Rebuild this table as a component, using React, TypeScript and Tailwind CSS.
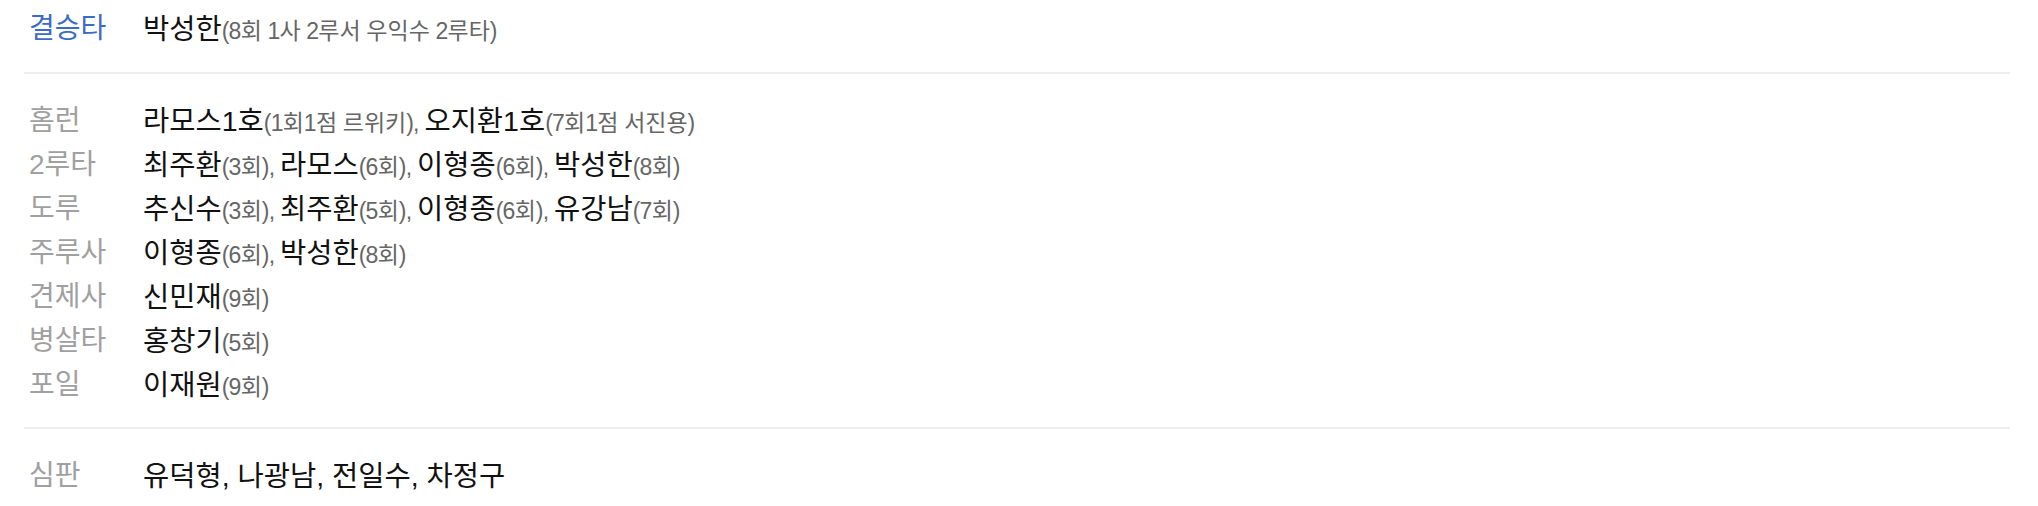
type Part = { name: string; note?: string };

type Row = {
  label: string;
  highlight?: boolean;
  items: Part[];
};

const decisive: Row[] = [
  {
    label: "결승타",
    highlight: true,
    items: [{ name: "박성한", note: "(8회 1사 2루서 우익수 2루타)" }],
  },
];

const records: Row[] = [
  {
    label: "홈런",
    items: [
      { name: "라모스1호", note: "(1회1점 르위키)" },
      { name: "오지환1호", note: "(7회1점 서진용)" },
    ],
  },
  {
    label: "2루타",
    items: [
      { name: "최주환", note: "(3회)" },
      { name: "라모스", note: "(6회)" },
      { name: "이형종", note: "(6회)" },
      { name: "박성한", note: "(8회)" },
    ],
  },
  {
    label: "도루",
    items: [
      { name: "추신수", note: "(3회)" },
      { name: "최주환", note: "(5회)" },
      { name: "이형종", note: "(6회)" },
      { name: "유강남", note: "(7회)" },
    ],
  },
  {
    label: "주루사",
    items: [
      { name: "이형종", note: "(6회)" },
      { name: "박성한", note: "(8회)" },
    ],
  },
  { label: "견제사", items: [{ name: "신민재", note: "(9회)" }] },
  { label: "병살타", items: [{ name: "홍창기", note: "(5회)" }] },
  { label: "포일", items: [{ name: "이재원", note: "(9회)" }] },
];

const umpires: Row[] = [
  {
    label: "심판",
    items: [
      { name: "유덕형" },
      { name: "나광남" },
      { name: "전일수" },
      { name: "차정구" },
    ],
  },
];

// digits/parens in the notes are set tighter than the hangul
function Note({ text }: { text: string }) {
  const parts = text.split(/([가-힣]+)/).filter(Boolean);
  return (
    <span className="text-[23px] text-[#666]">
      {parts.map((p, i) =>
        /[가-힣]/.test(p) ? (
          <span key={i}>{p}</span>
        ) : (
          <span key={i} className="tracking-[-0.75px]">
            {p}
          </span>
        ),
      )}
    </span>
  );
}

function RecordRow({ row }: { row: Row }) {
  return (
    <li className="flex h-[44px] items-center">
      <span
        className={`w-[119px] shrink-0 pl-[5px] text-[28px] ${
          row.highlight ? "text-[#3b6bc4]" : "text-[#a0a0a0]"
        }`}
      >
        {row.label}
      </span>
      <p className="text-[28.5px] text-[#111]">
        {row.items.map((item, i) => {
          const last = i === row.items.length - 1;
          return (
            <span key={i}>
              {item.name}
              {item.note ? (
                <Note text={last ? item.note : `${item.note}, `} />
              ) : !last ? (
                ", "
              ) : null}
            </span>
          );
        })}
      </p>
    </li>
  );
}

export default function App() {
  return (
    <div
      className="min-h-[506px] bg-white pl-[24px] pr-[28px] leading-none"
      style={{ fontFamily: '"Liberation Sans", "Noto Sans CJK KR", sans-serif' }}
    >
      <ul className="border-b-2 border-[#eeeeee] pt-[7px] pb-[21px]">
        {decisive.map((row) => (
          <RecordRow key={row.label} row={row} />
        ))}
      </ul>
      <ul className="border-b-2 border-[#eeeeee] pt-[25px] pb-[20px]">
        {records.map((row) => (
          <RecordRow key={row.label} row={row} />
        ))}
      </ul>
      <ul className="pt-[25px]">
        {umpires.map((row) => (
          <RecordRow key={row.label} row={row} />
        ))}
      </ul>
    </div>
  );
}
